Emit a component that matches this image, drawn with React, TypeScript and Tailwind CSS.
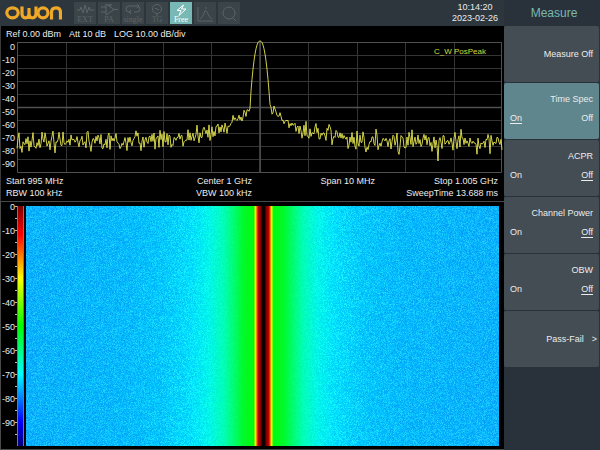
import { useEffect, useRef, type ReactNode } from 'react'

const DIVISIONS = [0, 1, 2, 3, 4, 5, 6, 7, 8, 9]
const PLOT_W = 485
const PLOT_H = 130
const FALL_W = 473
const FALL_H = 240

// small seeded generator so the noise floor looks the same on every load
function makeRandom(seed: number) {
  let s = seed
  return () => {
    s = (s * 1664525 + 1013904223) >>> 0
    return s / 4294967296
  }
}

function buildTrace() {
  const rand = makeRandom(41)
  const points: string[] = []
  for (let x = 0; x <= PLOT_W; x += 1) {
    const d = Math.abs(x - 243)
    const noise = rand() + rand() + rand() - 1.5
    let y: number
    if (d < 10) {
      y = 64 * Math.pow(d / 10, 2.3) - 1
    } else {
      const floor = 66 + 34 * (1 - Math.exp(-(d - 10) / 33))
      const swing = 4 + 6 * Math.min(1, (d - 10) / 50)
      y = floor + noise * swing
      if (x === 421) y = 119
      if (x === 349) y = 110
    }
    points.push(`${x},${y.toFixed(1)}`)
  }
  return points.join(' ')
}

const TRACE = buildTrace()

// colour by distance from the carrier
const FALL_STOPS: [number, number[]][] = [
  [0, [6, 0, 0]],
  [1, [14, 0, 0]],
  [2, [70, 0, 0]],
  [3, [130, 0, 0]],
  [5, [185, 0, 0]],
  [6, [235, 40, 0]],
  [7, [255, 140, 0]],
  [8, [250, 240, 0]],
  [9, [120, 255, 0]],
  [10, [0, 250, 20]],
  [20, [0, 250, 40]],
  [29, [0, 252, 110]],
  [40, [0, 255, 185]],
  [54, [0, 246, 235]],
  [72, [0, 224, 255]],
  [100, [0, 200, 255]],
  [140, [2, 186, 255]],
  [240, [6, 178, 255]],
]

function fallColor(distance: number) {
  const i = FALL_STOPS.findIndex(([at]) => at > distance)
  if (i < 1) return FALL_STOPS[FALL_STOPS.length - 1][1]
  const [x0, a] = FALL_STOPS[i - 1]
  const [x1, b] = FALL_STOPS[i]
  const t = (distance - x0) / (x1 - x0)
  return a.map((v, k) => v + (b[k] - v) * t)
}

function Waterfall() {
  const ref = useRef<HTMLCanvasElement>(null)

  useEffect(() => {
    const ctx = ref.current?.getContext('2d')
    if (!ctx) return
    const rand = makeRandom(7)
    const image = ctx.createImageData(FALL_W, FALL_H)
    for (let y = 0; y < FALL_H; y++) {
      for (let x = 0; x < FALL_W; x++) {
        const d = Math.abs(x - 237)
        const [r, g, b] = fallColor(d)
        const n = rand() + rand() - 1
        const amount = Math.min(1, Math.max(0, (d - 20) / 60))
        const p = (y * FALL_W + x) * 4
        image.data[p] = r + Math.max(0, n) * 36 * amount
        image.data[p + 1] = g + n * 36 * amount
        image.data[p + 2] = b + Math.min(0, n) * 12 * amount
        image.data[p + 3] = 255
      }
    }
    ctx.putImageData(image, 0, 0)
  }, [])

  return <canvas ref={ref} width={FALL_W} height={FALL_H} className="h-full w-full min-w-0 flex-1" />
}

function Spectrum() {
  return (
    <svg
      viewBox={`0 0 ${PLOT_W} ${PLOT_H}`}
      preserveAspectRatio="none"
      className="h-[130px] min-w-0 flex-1 overflow-visible"
      fill="none"
    >
      {DIVISIONS.map(i => (
        <g key={i} stroke="#343434">
          <path d={`M0 ${i * 13 + 0.5}H${PLOT_W}`} />
          <path d={`M${Math.round(i * 48.5) + 0.5} 0V${PLOT_H}`} />
        </g>
      ))}
      <path d="M0 65.5H485M243 0V130" stroke="#505050" strokeWidth="1.5" />
      <path d="M.5.5H484.5V130.5H.5Z" stroke="#505050" />
      <polyline points={TRACE} stroke="#e6e650" strokeWidth="0.9" />
    </svg>
  )
}

function Logo() {
  return (
    <svg viewBox="0 0 57 16" className="h-4 w-[57px]" fill="none" stroke="#f0a828" strokeWidth="3.2" role="img" aria-label="OWON">
      <ellipse cx="7.500" cy="7.800" rx="5.700" ry="5" />
      <path d="M17 1.500v6.800q0 4.500 3.500 4.500t3.500-4.500V3v5.300q0 4.500 3.500 4.500t3.500-4.500V1.500" />
      <ellipse cx="38" cy="7.800" rx="5" ry="5" />
      <path d="M46.500 14.400V7.500q0-4.700 4.500-4.700t4.500 4.700v6.900" />
    </svg>
  )
}

interface Tool {
  name: string
  caption?: string
  art: ReactNode
}

const TOOLS: Tool[] = [
  { name: 'External trigger', caption: 'EXT', art: <path d="M2 7h3l1-3 2 6 2-8 2 8 2-6 1 3h4" /> },
  { name: 'Preamplifier', caption: 'PA', art: <path d="M2 4h5M2 9h5M7 1v11l8-5.500zM15 6.500h4M11 1v3M9 2h4" /> },
  { name: 'Single sweep', caption: 'single', art: <path d="M6 3h8q3 0 3 3t-3 3h-3M14 1l2 2-2 2M8 9H6Q3 9 3 6t3-3M8 7l-2 2 2 2" /> },
  { name: 'Trigger', caption: 'TG', art: <><circle cx="10" cy="6" r="4.500" /><path d="M8 6q1-2 2 0t2 0M10 11v2" /></> },
  { name: 'Free run', caption: 'Free', art: <path d="M12.500 2L6 7.500h4L8 12.500l7-6.500h-4.500l2-4z" /> },
  { name: 'Trace peak', art: <path d="M3 3v14h15M5 15q3-2 4-6t2-2q1 0 2 3t4 5M10 4h2" /> },
  { name: 'Search', art: <><circle cx="10" cy="9" r="6" /><path d="M14 14l3 3" /></> },
]

function ToolButton({ tool }: { tool: Tool }) {
  const active = tool.caption === 'Free'
  return (
    <button
      aria-label={tool.name}
      className={`flex h-[22px] w-[22px] flex-col items-center justify-end ${active ? 'bg-[#79b9b5] text-white' : 'bg-[#3a4449] text-[#5a656b]'}`}
    >
      <svg viewBox={tool.caption ? '0 0 20 13' : '0 0 20 20'} className={tool.caption ? 'h-[13px] w-5' : 'h-5 w-5'} fill="none" stroke="currentColor">
        {tool.art}
      </svg>
      {tool.caption && <span className="font-['Liberation_Serif',serif] text-[8px] leading-[8px]">{tool.caption}</span>}
    </button>
  )
}

interface MenuItem {
  label: string
  state?: 'On' | 'Off'
  more?: boolean
}

const MENU: MenuItem[] = [
  { label: 'Measure Off' },
  { label: 'Time Spec', state: 'On' },
  { label: 'ACPR', state: 'Off' },
  { label: 'Channel Power', state: 'Off' },
  { label: 'OBW', state: 'Off' },
  { label: 'Pass-Fail', more: true },
]

function MenuButton({ item }: { item: MenuItem }) {
  return (
    <button
      className={`flex h-14 w-full flex-col justify-center rounded-xs leading-3 ${item.state === 'On' ? 'bg-[#5f868c]' : 'bg-[#444d53]'} ${item.more ? 'pr-0.5' : 'pr-1.5'} ${item.state ? 'pb-1.5' : ''} pl-1.5`}
    >
      <span className="flex w-full justify-end gap-2">
        {item.label}
        {item.more && <span>&gt;</span>}
      </span>
      {item.state && (
        <span className="mt-[7px] flex w-full justify-between">
          <span className={item.state === 'On' ? 'underline underline-offset-2' : ''}>On</span>
          <span className={item.state === 'Off' ? 'underline underline-offset-2' : ''}>Off</span>
        </span>
      )}
    </button>
  )
}

export default function App() {
  return (
    <div className="flex min-h-screen bg-black font-['Liberation_Sans',Arial,sans-serif] text-[9px] leading-3 text-[#ececec]">
      <main className="flex min-w-0 flex-1 flex-col">
        <header className="flex h-[26px] items-center bg-[#2c363c] pr-1.5 pl-[5px]">
          <Logo />
          <div className="ml-3 flex gap-0.5">
            {TOOLS.map(tool => <ToolButton key={tool.name} tool={tool} />)}
          </div>
          <time className="ml-auto text-center leading-[11px]">
            10:14:20
            <br />
            2023-02-26
          </time>
        </header>

        <section className="border-l border-[#3a3a3a] pb-0.5">
          <div className="flex h-4 items-center gap-2 pl-[5px]">
            <span>Ref 0.00 dBm</span>
            <span>Att 10 dB</span>
            <span>LOG 10.00 dB/div</span>
          </div>
          <div className="relative flex pr-0.5">
            <div className="-mt-px w-4 shrink-0 pr-0.5 leading-[13px]">
              {DIVISIONS.map(i => <div key={i} className="flex justify-end">{i === 0 ? '0' : -i * 10}</div>)}
            </div>
            <Spectrum />
            <span className="absolute top-1 right-[18px] text-[8px] text-[#d2dc3c]">C_W PosPeak</span>
          </div>
          <div className="grid grid-cols-4 pt-[3px] pr-1.5 pl-[5px] text-right">
            <span className="text-left">Start 995 MHz</span>
            <span>Center 1 GHz</span>
            <span>Span 10 MHz</span>
            <span>Stop 1.005 GHz</span>
            <span className="text-left">RBW 100 kHz</span>
            <span>VBW 100 kHz</span>
            <span className="col-span-2">SweepTime 13.688 ms</span>
          </div>
        </section>

        <section className="flex flex-1 border-y border-l border-[#4a4a4a] pt-1 pr-[5px] pb-[3px]">
          <div className="flex w-4 shrink-0 flex-col">
            {DIVISIONS.map(i => (
              <div key={i} className="relative flex flex-1 justify-end pr-0.5 leading-[3px]">
                {i === 0 ? '0' : -i * 10}
                <span className="absolute top-0 right-0 h-px w-0.5 bg-[#bbb]" />
                <span className="absolute top-1/2 right-0 h-px w-0.5 bg-[#bbb]" />
              </div>
            ))}
          </div>
          <div className="mr-0.5 w-[7px] shrink-0 border-x border-[#777] bg-[linear-gradient(#800000,#f00_12%,#ff8000_21%,#ff0_30%,#0f0_50%,#0ff_70%,#0080ff_80%,#00f_90%,#000080)]" />
          <Waterfall />
        </section>
      </main>

      <aside className="flex w-24 shrink-0 flex-col bg-[#29323a]">
        <h1 className="flex h-[26px] items-center justify-center pl-1 text-xs text-[#79b9b0]">Measure</h1>
        <nav className="flex flex-col gap-px pr-px">
          {MENU.map(item => <MenuButton key={item.label} item={item} />)}
        </nav>
      </aside>
    </div>
  )
}
